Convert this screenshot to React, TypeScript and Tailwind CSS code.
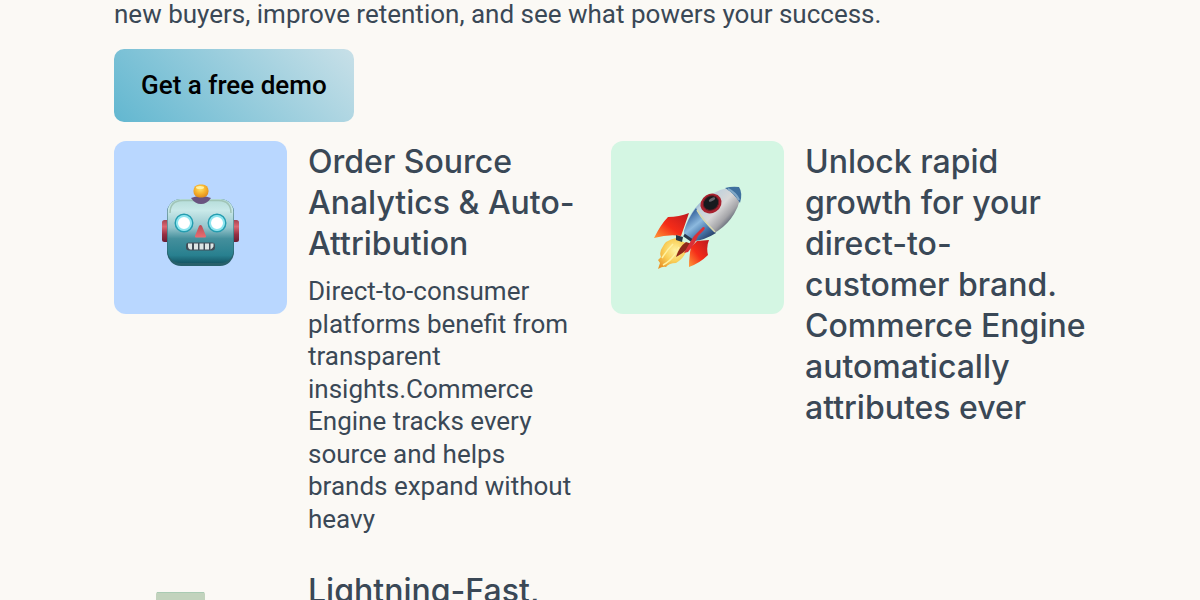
import React from "react";

type Feature = {
  title: string;
  text?: string;
  tile: string;
  icon: React.ReactNode;
};

const RobotIcon = () => (
  <svg viewBox="1 3 100 110" className="w-[100px]" aria-hidden="true">
    <defs>
      <linearGradient id="robot-face" x1="0" y1="0" x2="0" y2="1">
        <stop offset="0" stopColor="#b4dcd9" />
        <stop offset="0.18" stopColor="#c9e9e9" />
        <stop offset="0.45" stopColor="#94c4cb" />
        <stop offset="0.62" stopColor="#448f9c" />
        <stop offset="0.88" stopColor="#28808f" />
        <stop offset="1" stopColor="#155766" />
      </linearGradient>
      <radialGradient id="robot-bulb" cx="0.45" cy="0.35" r="0.7">
        <stop offset="0" stopColor="#ffe169" />
        <stop offset="0.5" stopColor="#f7b42e" />
        <stop offset="1" stopColor="#dc861c" />
      </radialGradient>
      <linearGradient id="robot-ear" x1="0" y1="0" x2="0" y2="1">
        <stop offset="0" stopColor="#a64352" />
        <stop offset="0.3" stopColor="#dc6672" />
        <stop offset="0.65" stopColor="#972f43" />
        <stop offset="1" stopColor="#6b1c32" />
      </linearGradient>
      <linearGradient id="robot-nose" x1="0" y1="0" x2="0" y2="1">
        <stop offset="0" stopColor="#b84d55" />
        <stop offset="1" stopColor="#e96d72" />
      </linearGradient>
    </defs>
    <rect x="12" y="50" width="8" height="22" rx="2.5" fill="url(#robot-ear)" />
    <rect x="81" y="50" width="8" height="22" rx="2.5" fill="url(#robot-ear)" />
    <rect x="17" y="29" width="67" height="67" rx="14" fill="#28606b" />
    <rect x="17.5" y="29" width="66" height="64" rx="13" fill="url(#robot-face)" />
    <path
      d="M20 43 Q20 31 32 30.5 H69 Q81 31 81 43"
      fill="none"
      stroke="#a0c4b7"
      strokeWidth="1.5"
    />
    <path d="M41 28 Q51 24 61 28 Q57 34 51 34 Q45 34 41 28Z" fill="#69537f" />
    <rect x="43.5" y="14.5" width="15" height="13" rx="6" fill="url(#robot-bulb)" />
    <ellipse cx="50" cy="17.5" rx="4" ry="1.5" fill="#fff0a4" />
    <circle cx="34" cy="53" r="8.5" fill="#eefeff" stroke="#259db0" strokeWidth="2" />
    <circle cx="34" cy="53" r="7" fill="#fff" stroke="#8de5ef" strokeWidth="2" />
    <circle cx="67" cy="53" r="8.5" fill="#eefeff" stroke="#259db0" strokeWidth="2" />
    <circle cx="67" cy="53" r="7" fill="#fff" stroke="#8de5ef" strokeWidth="2" />
    <path
      d="M49 56 Q50.5 54 52 56 L56 66 Q56.5 67.5 54.5 67.5 H46.5 Q44.5 67.5 45 66Z"
      fill="url(#robot-nose)"
    />
    <rect x="36" y="72.5" width="29" height="8" rx="3" fill="#414e58" />
    <path
      d="M38 73.5h4v6h-2q-2-1-2-3z M44 73.5h4v6h-4z M49.5 73.5h4v6h-4z M55 73.5h4v6h-4z M60.5 73.5h3v3q-1 2-3 3z"
      fill="#dce6e5"
    />
  </svg>
);

const RocketIcon = () => (
  <svg viewBox="0 0 105 105" className="w-[105px]" aria-hidden="true">
    <defs>
      <linearGradient id="rocket-body" x1="46" y1="28" x2="78" y2="58" gradientUnits="userSpaceOnUse">
        <stop offset="0" stopColor="#5b8bbd" />
        <stop offset="0.22" stopColor="#bfd1dd" />
        <stop offset="0.55" stopColor="#d8d8d8" />
        <stop offset="0.8" stopColor="#a4a4a8" />
        <stop offset="1" stopColor="#485264" />
      </linearGradient>
      <linearGradient id="rocket-base" x1="44" y1="38" x2="65" y2="64" gradientUnits="userSpaceOnUse">
        <stop offset="0" stopColor="#315f99" />
        <stop offset="0.4" stopColor="#8cb9de" />
        <stop offset="0.7" stopColor="#4777ab" />
        <stop offset="1" stopColor="#263c63" />
      </linearGradient>
      <linearGradient id="rocket-fin" x1="1" y1="0" x2="0" y2="1">
        <stop offset="0" stopColor="#bd1920" />
        <stop offset="0.55" stopColor="#f52c18" />
        <stop offset="1" stopColor="#ff9b38" />
      </linearGradient>
      <radialGradient id="rocket-flame" cx="0.55" cy="0.4" r="0.7">
        <stop offset="0" stopColor="#fff2a0" />
        <stop offset="0.5" stopColor="#f9cf58" />
        <stop offset="1" stopColor="#e99327" />
      </radialGradient>
    </defs>
    <path
      d="M31 63 Q20 65 17 73 Q14 77 16 82 L13 85 L15 88 L13 94 Q18 91 21 92 Q24 88 31 88 Q40 83 44 70 Z"
      fill="url(#rocket-flame)"
    />
    <path d="M31 82 Q34 72 41 67 L47 69 Q42 76 31 82Z" fill="#8e281a" />
    <path
      d="M18 90 Q28 85 34 72 M17 83 Q22 75 28 69"
      fill="none"
      stroke="#fff1a1"
      strokeWidth="1.5"
    />
    <path d="M44 38 Q34 42 23 42 Q16 49 9 63 Q24 59 36 61Z" fill="url(#rocket-fin)" />
    <path d="M64 65 Q61 72 63 80 Q55 88 44 92 Q44 82 46 72 L52 66Z" fill="url(#rocket-fin)" />
    <path
      d="M39 56 Q45 34 61 23 Q77 11 94 12 Q98 24 89 39 Q77 59 49 66 L39 60Z"
      fill="url(#rocket-body)"
    />
    <path
      d="M39 56 Q43 43 51 33 Q56 45 71 58 Q60 65 49 66 L39 60Z"
      fill="url(#rocket-base)"
    />
    <path d="M80 13 Q87 11 94 12 Q98 18 95 28 Q89 18 80 13Z" fill="#3f709e" />
    <path d="M83 14 Q91 18 94 25" fill="none" stroke="#81a8c7" strokeWidth="2" />
    <path d="M52 35 Q58 45 70 57" fill="none" stroke="#d8d8ae" strokeWidth="1.5" />
    <path d="M39 60 L49 67" stroke="#29394d" strokeWidth="3" />
    <path d="M31 60 L38 62 L37 67 L31 65Z" fill="#263746" />
    <path
      d="M58 52 Q61 52 59 55 L53 61 Q50 69 43 77 L39 78 Q45 67 49 61Z"
      fill="#da3037"
    />
    <ellipse cx="66" cy="28.5" rx="11" ry="9.5" transform="rotate(-32 66 28.5)" fill="#a8222f" />
    <ellipse
      cx="66"
      cy="28"
      rx="8"
      ry="7"
      transform="rotate(-32 66 28)"
      fill="#171a1e"
      stroke="#651c25"
      strokeWidth="1"
    />
    <ellipse cx="67" cy="24.5" rx="3.5" ry="1.5" transform="rotate(-30 67 24.5)" fill="#67646c" />
  </svg>
);

const BarIcon = () => (
  <svg viewBox="0 0 173 173" className="w-full" aria-hidden="true">
    <rect x="42" y="22" width="49" height="130" rx="2" fill="#c2d3bd" />
    <path d="M43 22.5 H90" stroke="#a9cbb3" strokeWidth="1" />
  </svg>
);

const features: Feature[] = [
  {
    title: "Order Source Analytics & Auto-Attribution",
    text: "Direct-to-consumer platforms benefit from transparent insights.Commerce Engine tracks every source and helps brands expand without heavy",
    tile: "bg-[#b9d7ff]",
    icon: <RobotIcon />,
  },
  {
    // the product name stays on one line
    title:
      "Unlock rapid growth for your direct-to-customer brand. Commerce\u00a0Engine automatically attributes ever",
    tile: "bg-[#d4f6e3]",
    icon: <RocketIcon />,
  },
  {
    title: "Lightning-Fast,",
    tile: "",
    icon: <BarIcon />,
  },
];

const FeatureItem = ({ title, text, tile, icon }: Feature) => (
  <article className="flex items-start gap-[21px]">
    <div
      className={`flex aspect-square w-[173px] shrink-0 items-center justify-center rounded-xl ${tile}`}
    >
      {icon}
    </div>
    <div className="min-w-0 flex-1">
      <h2 className="font-['Inter',sans-serif] text-[32px] leading-[41px] font-medium">
        {title}
      </h2>
      {text && <p className="mt-[11px] text-[26px] leading-tight">{text}</p>}
    </div>
  </article>
);

const App = () => {
  return (
    <main className="h-screen overflow-hidden bg-[#fbf9f5] px-[9.5%] font-['Roboto',sans-serif] text-[#3a4856]">
      <p className="text-[26px] leading-7">
        new buyers, improve retention, and see what powers your success.
      </p>
      <button
        type="button"
        className="mt-[21px] mb-[19px] block rounded-[10px] bg-[linear-gradient(45deg,#62b7d0,#c8e0e8)] px-[27px] py-5 text-[26px] leading-[33px] font-medium text-black"
      >
        Get a free demo
      </button>
      <section className="grid grid-cols-2 gap-x-[22px] gap-y-[35px]">
        {features.map((feature) => (
          <FeatureItem key={feature.title} {...feature} />
        ))}
      </section>
    </main>
  );
};

export default App;
